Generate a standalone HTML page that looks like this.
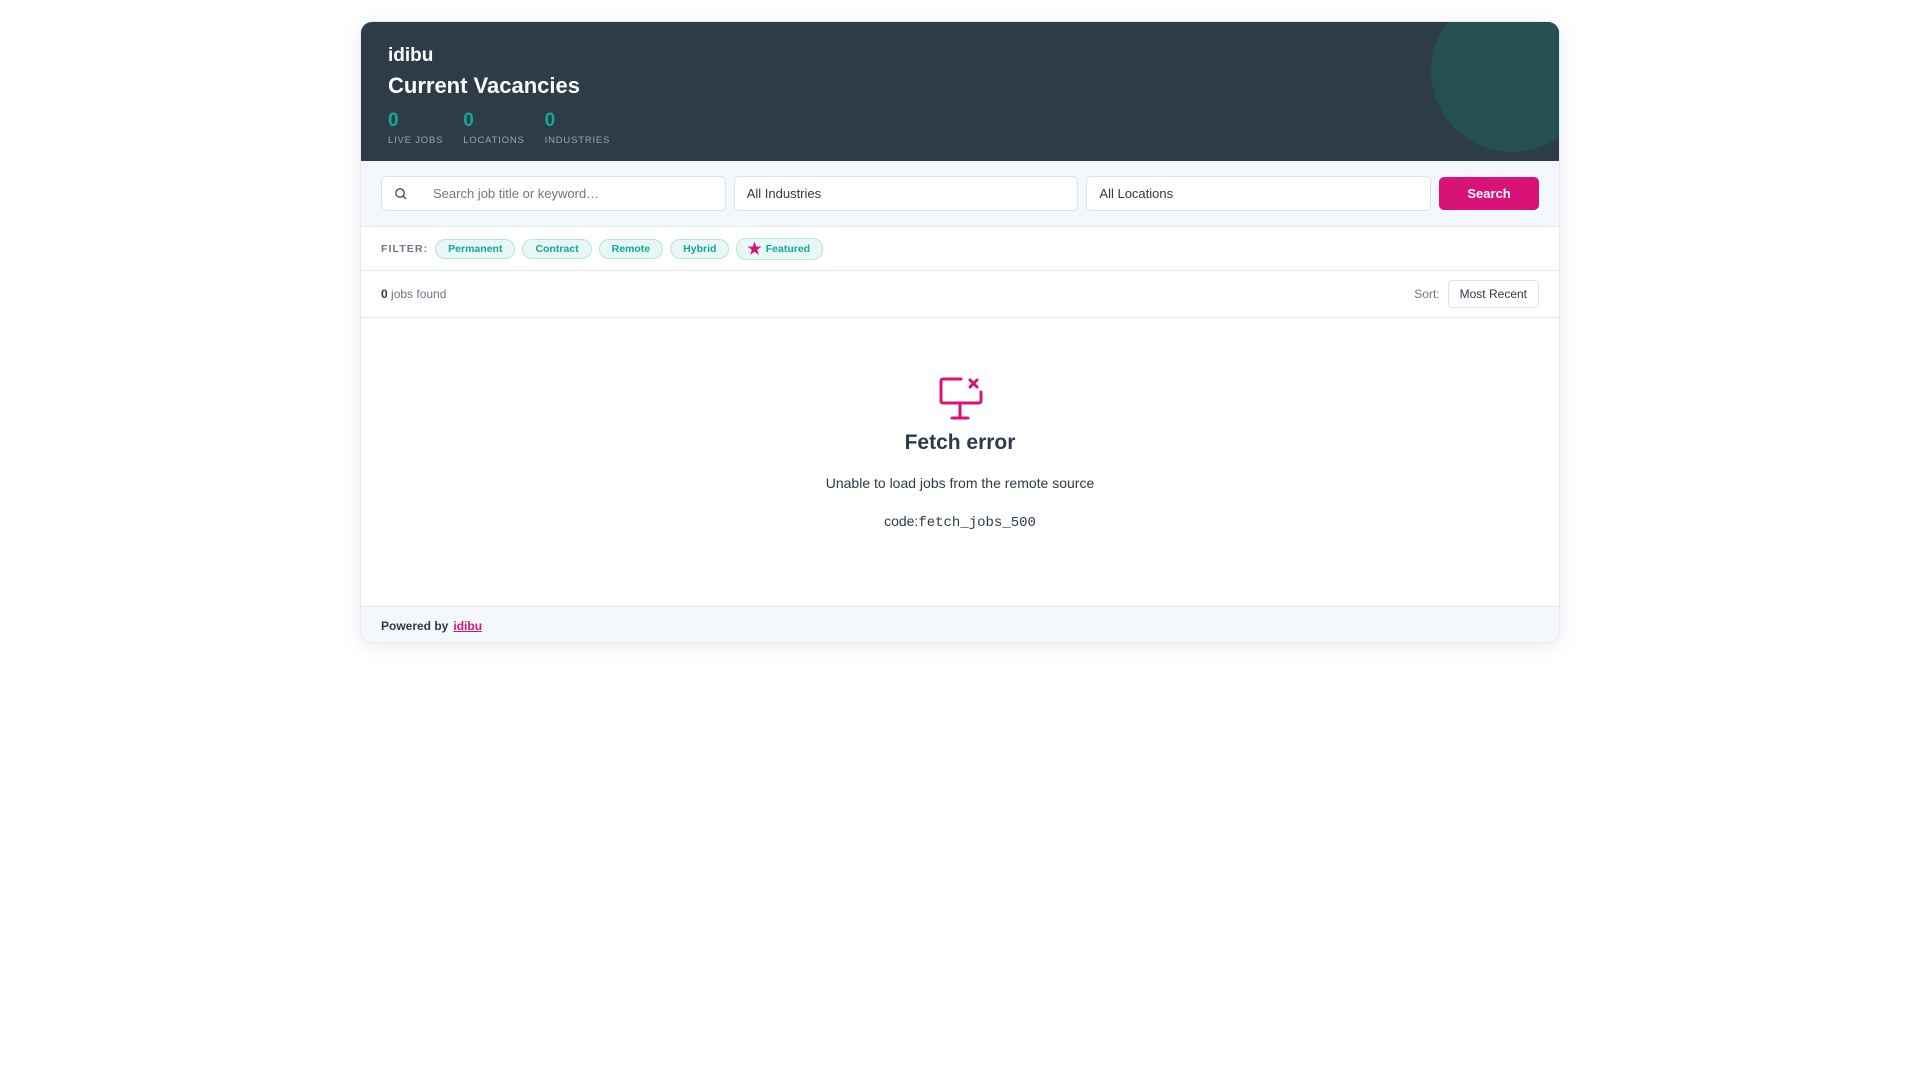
<!DOCTYPE html>
<html><head><style>
*{box-sizing:border-box;margin:0;padding:0}
body{width:1920px;height:1080px;background:#fff;font-family:"Liberation Sans",sans-serif;color:#2d3a48}
.card{position:absolute;left:360px;top:21px;width:1200px;height:622px;border-radius:12px;overflow:hidden;box-shadow:0 4px 20px rgba(0,0,0,.08);border:1px solid #e6ebf1}
.hdr{position:relative;height:139px;background:#2e3b48;padding:23px 27px;color:#fff;overflow:hidden}
.circ{position:absolute;left:1070px;top:-32px;width:162px;height:162px;border-radius:50%;background:#254f53}
.brand{font-size:19px;font-weight:bold}
.title{font-size:22px;font-weight:bold;margin-top:6px}
.stats{display:flex;gap:20px;margin-top:12px}
.stat b{display:block;color:#14a89a;font-size:19px;line-height:19px}
.stat span{font-size:9.5px;letter-spacing:.8px;color:#9aa6b2}
.sb{height:66px;background:#f4f7fb;border-bottom:1px solid #e3e8ee;padding:15px 20px;display:flex;gap:8px}
.in{height:35px;border:1px solid #dde3ea;border-radius:5px;background:#fff;font-size:13px;display:flex;align-items:center;padding-left:12px;width:345px}
.btn{width:100px;height:33px;margin-top:1px;background:#d81276;color:#fff;font-weight:bold;font-size:13px;border-radius:5px;display:flex;align-items:center;justify-content:center}
.fr{height:44px;border-bottom:1px solid #e3e8ee;display:flex;align-items:center;padding-left:20px;gap:7px}
.fl{font-size:10.5px;font-weight:bold;letter-spacing:1.1px;color:#6b7785}
.chip{height:20px;border:1px solid #b9e3dd;background:#e8f7f5;border-radius:10px;color:#14a89a;font-size:10.5px;font-weight:bold;padding:0 12px;display:flex;align-items:center}
.rr{height:47px;border-bottom:1px solid #e3e8ee;display:flex;align-items:center;justify-content:space-between;padding:0 20px;font-size:12px;color:#6b7785}
.sort{display:flex;align-items:center;gap:8px}
.sel{border:1px solid #dde3ea;border-radius:4px;padding:6px 11px;color:#2d3a48}
.body{height:288px;text-align:center;padding-top:58px}
.body h2{font-size:21px;margin-top:4px}
.body p{font-size:14px;margin-top:20px}
.code{font-size:14px;margin-top:22px}
.code tt{font-family:"Liberation Mono",monospace}
.ft{height:38px;background:#f4f7fb;border-top:1px solid #e3e8ee;display:flex;align-items:center;padding-left:20px;font-size:12px;font-weight:bold;gap:5px}
.ft a{color:#d81276;text-decoration:underline}
</style></head><body>
<div class="card">
<div class="hdr"><div class="circ"></div>
<div class="brand">idibu</div><div class="title">Current Vacancies</div>
<div class="stats"><div class="stat"><b>0</b><span>LIVE JOBS</span></div><div class="stat"><b>0</b><span>LOCATIONS</span></div><div class="stat"><b>0</b><span>INDUSTRIES</span></div></div>
</div>
<div class="sb">
<div class="in" style="color:#777"><svg width="14" height="14" viewBox="0 0 14 14" style="margin-right:25px"><circle cx="6" cy="6" r="4.2" fill="none" stroke="#444" stroke-width="1.3"/><path d="M9 9l3 3" stroke="#444" stroke-width="1.3"/></svg>Search job title or keyword…</div>
<div class="in">All Industries</div><div class="in">All Locations</div><div class="btn">Search</div>
</div>
<div class="fr"><span class="fl">FILTER:</span><span class="chip">Permanent</span><span class="chip">Contract</span><span class="chip">Remote</span><span class="chip">Hybrid</span><span class="chip" style="height:22px;padding-left:10px"><span style="color:#d81276;font-size:16px;margin-right:4px">★</span>Featured</span></div>
<div class="rr"><span><b style="color:#2d3a48">0</b> jobs found</span><div class="sort">Sort: <span class="sel">Most Recent</span></div></div>
<div class="body">
<svg width="46" height="46" viewBox="0 0 46 46"><path d="M24 3H6a2 2 0 0 0-2 2v20a2 2 0 0 0 2 2h36a2 2 0 0 0 2-2V16" fill="none" stroke="#d81276" stroke-width="3" stroke-linecap="round"/><path d="M33 4l7 7M40 4l-7 7" stroke="#d81276" stroke-width="3" stroke-linecap="round"/><path d="M23 27v14M15 42h16" stroke="#d81276" stroke-width="3" stroke-linecap="round"/></svg>
<h2>Fetch error</h2><p>Unable to load jobs from the remote source</p><div class="code">code:<tt>fetch_jobs_500</tt></div>
</div>
<div class="ft">Powered by <a>idibu</a></div>
</div>
</body></html>
